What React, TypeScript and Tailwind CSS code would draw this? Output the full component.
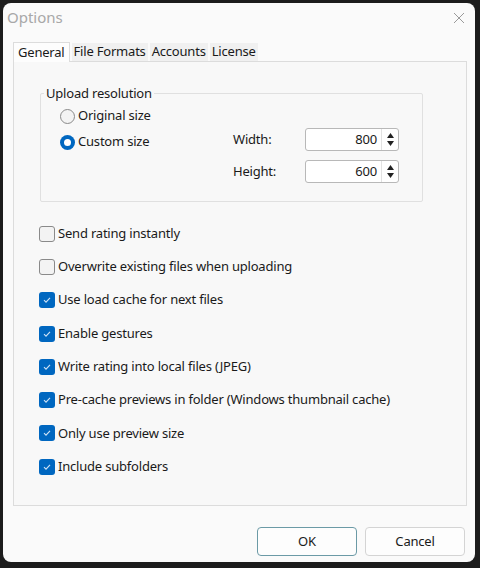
import React from 'react';

const checks = [
  { label: 'Send rating instantly', on: false },
  { label: 'Overwrite existing files when uploading', on: false },
  { label: 'Use load cache for next files', on: true },
  { label: 'Enable gestures', on: true },
  { label: 'Write rating into local files (JPEG)', on: true },
  { label: 'Pre-cache previews in folder (Windows thumbnail cache)', on: true },
  { label: 'Only use preview size', on: true },
  { label: 'Include subfolders', on: true },
];

const CheckBox = ({ label, on }: { label: string; on: boolean }) => (
  <div className="flex items-center h-[33.3px]">
    {on ? (
      <div className="w-4 h-4 rounded-[3px] bg-[#0067c0] flex items-center justify-center">
        <svg width="10" height="10" viewBox="0 0 10 10">
          <path d="M2 5.2 L4 7.2 L8 2.8" fill="none" stroke="#cfe3f5" strokeWidth="1.1" />
        </svg>
      </div>
    ) : (
      <div className="w-4 h-4 rounded-[3px] border border-[#8a8a8a] bg-[#f3f3f3]" />
    )}
    <span className="ml-[3px]">{label}</span>
  </div>
);

const Radio = ({ label, on }: { label: string; on: boolean }) => (
  <div className="flex items-center h-[26px]">
    {on ? (
      <div className="w-[15px] h-[15px] rounded-full bg-[#0067c0] flex items-center justify-center">
        <div className="w-[7px] h-[7px] rounded-full bg-white" />
      </div>
    ) : (
      <div className="w-[15px] h-[15px] rounded-full border border-[#8a8a8a] bg-[#f3f3f3]" />
    )}
    <span className="ml-[3px]">{label}</span>
  </div>
);

const Spin = ({ value }: { value: string }) => (
  <div className="flex w-[94px] h-[23px] border border-[#b8b8b8] rounded-[3px] bg-white">
    <div className="flex-1 text-right pr-[4px] leading-[21px]">{value}</div>
    <div className="w-[17px] flex flex-col items-center justify-center border-l border-[#e2e2e2] gap-[3px]">
      <svg width="7" height="5" viewBox="0 0 7 5"><path d="M0 5 L3.5 0 L7 5 Z" fill="#222" /></svg>
      <svg width="7" height="5" viewBox="0 0 7 5"><path d="M0 0 L3.5 5 L7 0 Z" fill="#222" /></svg>
    </div>
  </div>
);

export default function App() {
  return (
    <div
      className="w-[480px] h-[568px] bg-[#1c1c1c] pt-[3px] pl-[3px] pr-[5px] pb-[6px] text-[13px] tracking-[-0.2px] text-[#1a1a1a]"
      style={{ fontFamily: '"Noto Sans", "Open Sans", sans-serif' }}
    >
      <div className="w-full h-full bg-[#fafafa] rounded-[8px] flex flex-col">
        {/* title bar */}
        <div className="h-[29px] flex items-center justify-between pl-[4px] pr-[10px]">
          <span className="text-[15px] tracking-normal text-[#a8a8a8]">Options</span>
          <svg width="12" height="12" viewBox="0 0 12 12">
            <path d="M1 1 L11 11 M11 1 L1 11" stroke="#9a9a9a" strokeWidth="1" />
          </svg>
        </div>

        {/* tabs */}
        <div className="mt-[10px] ml-[10px] mr-[8px] flex items-end">
          <div className="h-[20px] px-[4px] bg-[#fdfdfd] border border-b-0 border-[#dcdcdc] leading-[18px] relative z-10 -mb-px">
            General
          </div>
          <div className="h-[18px] px-[2px] ml-[2px] bg-[#f0f0f0] leading-[17px]">File Formats</div>
          <div className="h-[18px] px-[2px] ml-[2px] bg-[#f0f0f0] leading-[17px]">Accounts</div>
          <div className="h-[18px] px-[2px] ml-[2px] bg-[#f0f0f0] leading-[17px]">License</div>
        </div>

        {/* panel */}
        <div className="ml-[10px] mr-[8px] h-[445px] border border-[#dcdcdc] bg-[#f8f8f8] pt-[31px] pl-[26px]">
          <div className="relative w-[383px] h-[109px] border border-[#e0e0e0] rounded-[2px] pt-[9px] pl-[19px] flex">
            <span className="absolute -top-[10px] left-[3px] bg-[#f8f8f8] px-[2px]">Upload resolution</span>
            <div className="w-[173px]">
              <Radio label="Original size" on={false} />
              <Radio label="Custom size" on={true} />
            </div>
            <div className="mt-[25px] flex flex-col gap-[9px]">
              <div className="flex items-center">
                <span className="w-[72px]">Width:</span>
                <Spin value="800" />
              </div>
              <div className="flex items-center">
                <span className="w-[72px]">Height:</span>
                <Spin value="600" />
              </div>
            </div>
          </div>

          <div className="mt-[15px] ml-[-1px]">
            {checks.map((c) => (
              <CheckBox key={c.label} label={c.label} on={c.on} />
            ))}
          </div>
        </div>

        {/* buttons */}
        <div className="flex justify-end gap-[8px] mt-[21px] mr-[10px]">
          <button className="w-[100px] h-[29px] rounded-[4px] border border-[#6b9aa6] bg-[#fdfdfd]">OK</button>
          <button className="w-[100px] h-[29px] rounded-[4px] border border-[#d4d4d4] bg-[#fdfdfd]">Cancel</button>
        </div>
      </div>
    </div>
  );
}
